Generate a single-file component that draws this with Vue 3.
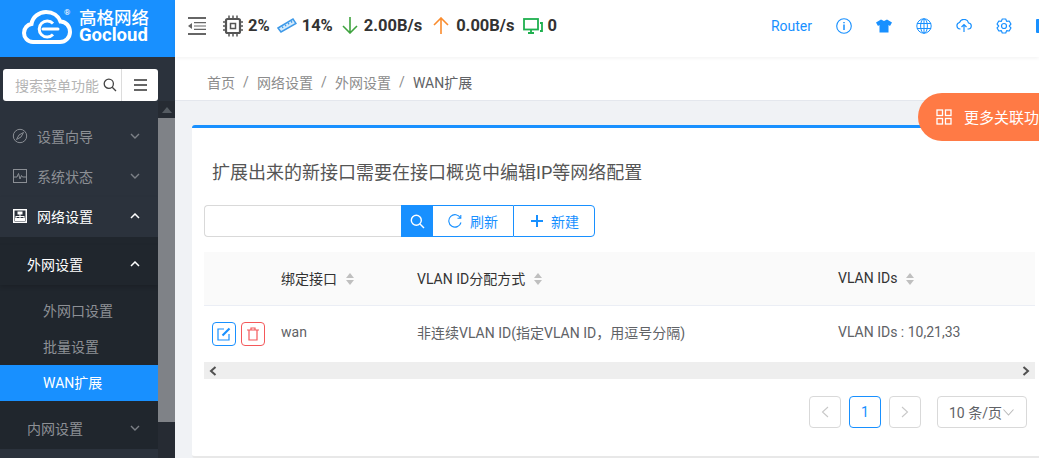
<script setup>
const subs = [
  { t: '外网口设置' },
  { t: '批量设置' },
  { t: 'WAN扩展', active: true }
]
const gear = (() => {
  const pts = []
  for (let i = 0; i < 6; i++) {
    const a = (i * 60 - 90) * Math.PI / 180
    const at = (r, d) => {
      const t = a + d * Math.PI / 180
      return (8 + r * Math.cos(t)).toFixed(2) + ' ' + (8 + r * Math.sin(t)).toFixed(2)
    }
    pts.push(at(5.300, -30), at(7.200, -14), at(7.200, 14))
  }
  return 'M' + pts.join('L') + 'Z'
})()
</script>

<template>
  <div class="page">
    <aside class="side">
      <div class="logo">
        <svg class="cloud" width="50" height="36" viewBox="0 0 50 36" fill="none" stroke="#fff">
          <path stroke-width="4" d="M11 33C5.500 33 2 28.500 2 24C2 19 5.500 15.500 9.500 15C10.500 8 17 3 24 3C31 3 36.500 7 38.500 12.500C44 12.500 48 17.500 48 23C48 28.500 43.500 33 38 33Z"/>
          <path stroke-width="3" d="M31 14.500A8 8 0 1 0 31 25.500"/>
          <path stroke-width="3" stroke-linecap="round" d="M21 20H36"/>
        </svg>
        <span class="reg">®</span>
        <div class="brand"><span class="cn">高格网络</span><span class="en">Gocloud</span></div>
      </div>
      <div class="side-body">
        <div class="search-wrap">
          <div class="side-search">
            <span class="ph">搜索菜单功能</span>
            <svg class="mag" width="14" height="14" viewBox="0 0 14 14" fill="none" stroke="#444" stroke-width="1.300"><circle cx="5.800" cy="5.800" r="4.600"/><path d="M9.200 9.200L13 13"/></svg>
            <span class="burger"><i></i><i></i><i></i></span>
          </div>
        </div>
        <div class="menu-scroll">
          <nav class="menu">
            <div class="m1">
              <svg width="16" height="16" viewBox="0 0 16 16" fill="none" stroke="#8b8f95"><circle cx="8" cy="8" r="6.700"/><path d="M11.500 4.500L9 9L4.500 11.500L7 7Z"/></svg>
              <span>设置向导</span>
              <svg class="chev" width="10" height="6" viewBox="0 0 10 6" fill="none" stroke="#7c8087" stroke-width="1.400"><path d="M1 1L5 5L9 1"/></svg>
            </div>
            <div class="m1">
              <svg width="16" height="16" viewBox="0 0 16 16" fill="none" stroke="#8b8f95"><rect x="1.500" y="1.500" width="13" height="13"/><path d="M2 9H5L6.500 5.500L8 11L9.500 7.500L10.500 9H14"/></svg>
              <span>系统状态</span>
              <svg class="chev" width="10" height="6" viewBox="0 0 10 6" fill="none" stroke="#7c8087" stroke-width="1.400"><path d="M1 1L5 5L9 1"/></svg>
            </div>
            <div class="m1 open">
              <svg width="16" height="16" viewBox="0 0 16 16"><path fill="#fff" fill-rule="evenodd" d="M1 1H15V15H1ZM2.500 2.500V13.500H13.500V2.500ZM5.500 3.500H10.500V6.500H8.500V8H12.500V10H13V13H10V10H11.500V9H8.500V10H10V13H6V10H7.500V9H4.500V10H6V13H3V10H3.500V8H7.500V6.500H5.500Z"/></svg>
              <span>网络设置</span>
              <svg class="chev" width="10" height="6" viewBox="0 0 10 6" fill="none" stroke="#fff" stroke-width="1.500"><path d="M1 5L5 1L9 5"/></svg>
            </div>
            <div class="sub">
              <div class="m2 open">
                <span>外网设置</span>
                <svg class="chev" width="10" height="6" viewBox="0 0 10 6" fill="none" stroke="#fff" stroke-width="1.500"><path d="M1 5L5 1L9 5"/></svg>
              </div>
              <div class="m3-list">
                <div v-for="s in subs" :key="s.t" class="m3" :class="{ active: s.active }">{{ s.t }}</div>
              </div>
              <div class="m2 last">
                <span>内网设置</span>
                <svg class="chev" width="10" height="6" viewBox="0 0 10 6" fill="none" stroke="#7c8087" stroke-width="1.400"><path d="M1 1L5 5L9 1"/></svg>
              </div>
            </div>
          </nav>
          <div class="sbar">
            <div class="sbtn"><svg width="10" height="6" viewBox="0 0 10 6"><path fill="#555b62" d="M5 0L10 6H0Z"/></svg></div>
            <div class="sthumb"></div>
          </div>
        </div>
      </div>
    </aside>

    <div class="main">
      <header class="top">
        <svg class="outdent" width="18" height="18" viewBox="0 0 18 18" fill="#666"><path d="M0 0H18V2H0ZM6 5H18V6.200H6ZM6 8.400H18V9.600H6ZM6 11.800H18V13H6ZM0 16H18V18H0ZM0 9L4 6V12Z"/></svg>
        <svg class="i-cpu" width="20" height="22" viewBox="0 0 20 22" fill="none" stroke="#555"><rect x="3" y="4" width="14" height="14" rx="1.500" stroke-width="2.200"/><rect x="7.500" y="8.500" width="5" height="5" stroke-width="1.500"/><path stroke-width="1.500" d="M6 0.500V3M10 0.500V3M14 0.500V3M6 19V21.500M10 19V21.500M14 19V21.500M0 7H2.500M0 11H2.500M0 15H2.500M17.500 7H20M17.500 11H20M17.500 15H20"/></svg>
        <b class="v v-cpu">2%</b>
        <svg class="i-mem" width="20" height="15" viewBox="0 0 20 15" fill="none" stroke="#3f9ae8"><path stroke-width="1.500" fill="#d6ebfb" d="M1 10L16 1L19 5.500L4 14Z"/><path stroke-width="1.300" stroke="#3f9ae8" d="M6 10L5.200 8.500M9 8.200L8.200 6.700M12 6.400L11.200 4.900M15 4.600L14.200 3.100"/></svg>
        <b class="v v-mem">14%</b>
        <svg class="i-down" width="16" height="17" viewBox="0 0 16 17" fill="none" stroke="#3fa33f" stroke-width="1.600"><path d="M8 0V16M1 9L8 16L15 9"/></svg>
        <b class="v v-down">2.00B/s</b>
        <svg class="i-up" width="16" height="17" viewBox="0 0 16 17" fill="none" stroke="#fa8c2e" stroke-width="1.600"><path d="M8 17V1M1 8L8 1L15 8"/></svg>
        <b class="v v-up">0.00B/s</b>
        <svg class="i-mon" width="20" height="16" viewBox="0 0 20 16" fill="none" stroke="#1fb04f" stroke-width="1.800"><rect x="1" y="1" width="14" height="10.500"/><path d="M5 15H11M8 12V15M17 5H19V13H17"/></svg>
        <b class="v">0</b>
        <span class="router">Router</span>
        <div class="tools">
          <svg width="16" height="16" viewBox="0 0 16 16" fill="none" stroke="#1890ff" stroke-width="1.100"><circle cx="8" cy="8" r="7.300"/><path stroke-width="1.500" d="M8 6.500V12M8 4V5.300"/></svg>
          <svg width="16" height="14" viewBox="0 0 16 14" fill="#1890ff"><path d="M5 0.500L8 2L11 0.500L16 3.500L14 7L12.500 6V13.500H3.500V6L2 7L0 3.500Z"/></svg>
          <svg width="16" height="16" viewBox="0 0 16 16" fill="none" stroke="#1890ff"><circle cx="8" cy="8" r="7.200"/><ellipse cx="8" cy="8" rx="3.400" ry="7.200"/><path d="M8 1V15M1 5.500H15M1 10.500H15"/></svg>
          <svg width="16" height="13" viewBox="0 0 16 13" fill="none" stroke="#1890ff" stroke-width="1.200"><path d="M4.500 10H4A3.300 3.300 0 0 1 3.500 3.500A4.700 4.700 0 0 1 12.500 4A3 3 0 0 1 12 10H11.500"/><path d="M8 13V6M5.500 8L8 5.500L10.500 8"/></svg>
          <svg width="16" height="16" viewBox="0 0 16 16" fill="none" stroke="#1890ff" stroke-width="1.200" stroke-linejoin="round"><path :d="gear"/><circle cx="8" cy="8" r="2.500"/></svg>
          <span class="blue-edge"></span>
        </div>
      </header>

      <div class="crumbs">
        <span>首页</span><em>/</em><span>网络设置</span><em>/</em><span>外网设置</span><em>/</em><span class="cur">WAN扩展</span>
      </div>

      <div class="content">
        <div class="float">
          <svg width="16" height="16" viewBox="0 0 16 16" fill="none" stroke="#fff" stroke-width="1.300"><rect x="1" y="1" width="5.500" height="5.500"/><rect x="9.500" y="1" width="5.500" height="5.500"/><rect x="1" y="9.500" width="5.500" height="5.500"/><rect x="9.500" y="9.500" width="5.500" height="5.500"/></svg>
          <span>更多关联功</span>
        </div>
        <section class="card">
          <h2>扩展出来的新接口需要在接口概览中编辑IP等网络配置</h2>
          <div class="bar">
            <div class="inp"></div>
            <div class="go"><svg width="15" height="15" viewBox="0 0 15 15" fill="none" stroke="#fff" stroke-width="1.400"><circle cx="6.300" cy="6.300" r="5"/><path d="M10 10L14 14"/></svg></div>
            <div class="btn b1">
              <svg width="14" height="14" viewBox="0 0 14 14" fill="none" stroke="#1890ff" stroke-width="1.100"><path d="M12.500 4A6.200 6.200 0 1 0 13 8.500M12.800 1V4.300H9.500"/></svg>
              <span>刷新</span>
            </div>
            <div class="btn b2">
              <svg width="12" height="12" viewBox="0 0 12 12" fill="#1890ff"><path d="M5 0H7V5H12V7H7V12H5V7H0V5H5Z"/></svg>
              <span>新建</span>
            </div>
          </div>
          <div class="table">
            <div class="tr th">
              <div class="c0"></div>
              <div class="c1">绑定接口<span class="sort"><i class="u"></i><i class="d"></i></span></div>
              <div class="c2">VLAN ID分配方式<span class="sort"><i class="u"></i><i class="d"></i></span></div>
              <div class="c3">VLAN IDs<span class="sort"><i class="u"></i><i class="d"></i></span></div>
            </div>
            <div class="tr td">
              <div class="c0 acts">
                <span class="act edit"><svg width="14" height="14" viewBox="0 0 14 14" fill="none" stroke="#1890ff" stroke-width="1.200"><path d="M12 7V13H1V2H7"/><path stroke-width="2.200" d="M5.500 8.500L12.500 1.500"/></svg></span>
                <span class="act del"><svg width="14" height="14" viewBox="0 0 14 14" fill="none" stroke="#f4585a" stroke-width="1.200"><path d="M1 3H13M5 3V1H9V3M3 3V13H11V3"/></svg></span>
              </div>
              <div class="c1">wan</div>
              <div class="c2">非连续VLAN ID(指定VLAN ID，用逗号分隔)</div>
              <div class="c3">VLAN IDs : 10,21,33</div>
            </div>
            <div class="hbar">
              <svg width="8" height="10" viewBox="0 0 8 10" fill="none" stroke="#505050" stroke-width="2"><path d="M6.500 1L2 5L6.500 9"/></svg>
              <svg width="8" height="10" viewBox="0 0 8 10" fill="none" stroke="#505050" stroke-width="2"><path d="M1.500 1L6 5L1.500 9"/></svg>
            </div>
          </div>
          <div class="pager">
            <span class="pg"><svg width="8" height="12" viewBox="0 0 8 12" fill="none" stroke="#c8c8c8" stroke-width="1.100"><path d="M7 1L1.500 6L7 11"/></svg></span>
            <span class="pg on">1</span>
            <span class="pg"><svg width="8" height="12" viewBox="0 0 8 12" fill="none" stroke="#c8c8c8" stroke-width="1.100"><path d="M1 1L6.500 6L1 11"/></svg></span>
            <span class="size">10 条/页<svg width="11" height="7" viewBox="0 0 11 7" fill="none" stroke="#bbb" stroke-width="1.100"><path d="M0.500 0.500L5.500 6L10.500 0.500"/></svg></span>
          </div>
        </section>
      </div>
    </div>
  </div>
</template>

<style>
html, body { margin: 0; overflow: hidden; }
</style>

<style scoped>
.page {
  width: 1039px; height: 458px; overflow: hidden; display: flex;
  font-family: Roboto, "Noto Sans CJK SC", sans-serif; font-size: 14px; color: #606266;
}
.side { width: 175px; flex: none; display: flex; flex-direction: column; background: #2b323c; }
.logo { height: 57px; background: #1890ff; display: flex; align-items: center; position: relative; padding: 0 0 4px 22px; box-sizing: border-box; flex: none; }
.reg { position: absolute; left: 64px; top: 8px; font-size: 8px; color: #fff; }
.brand { display: flex; flex-direction: column; margin: -2px 0 0 7px; color: #fff; font-weight: 700; }
.cn { font-size: 17.500px; line-height: 18px; font-weight: 500; white-space: nowrap; }
.en { font-size: 18.500px; line-height: 16px; }
.side-body { flex: 1; display: flex; flex-direction: column; min-height: 0; }
.search-wrap { height: 44px; flex: none; padding: 12px 0 0 3px; box-sizing: border-box; }
.side-search { width: 155px; height: 32px; background: #fff; border-radius: 3px; display: flex; align-items: center; box-sizing: border-box; padding-left: 12px; }
.ph { color: #b4b4b4; font-size: 14px; width: 85px; white-space: nowrap; overflow: hidden; flex: none; }
.mag { margin-left: 3px; flex: none; }
.burger { margin-left: 4px; height: 32px; flex: 1; border-left: 1px solid #dcdcdc; display: flex; flex-direction: column; justify-content: center; align-items: center; gap: 3px; }
.burger i { width: 13px; height: 2px; background: #666; }
.menu-scroll { flex: 1; display: flex; min-height: 0; }
.menu { width: 158px; flex: none; padding-top: 16px; }
.m1 { height: 40px; display: flex; align-items: center; padding: 0 0 2px 12px; color: #8d9095; gap: 9px; box-sizing: border-box; }
.m1.open { color: #fff; box-shadow: 0 2px 4px rgba(0,0,0,.12); }
.chev { margin-left: auto; margin-right: 18px; }
.sub { background: #20262d; padding-top: 8px; }
.m2 { height: 40px; display: flex; align-items: center; padding: 0 0 2px 27px; color: #8d9095; box-sizing: border-box; }
.m2.open { color: #fff; background: #20262d; box-shadow: 0 2px 4px rgba(0,0,0,.15); }
.m2.last { margin-top: 8px; }
.m3-list { padding-top: 8px; }
.m3 { height: 36px; line-height: 36px; padding-left: 43px; color: #8d9095; }
.m3.active { background: #1890ff; color: #fff; }
.sbar { flex: 1; background: #262b33; display: flex; flex-direction: column; }
.sbtn { height: 17px; display: flex; align-items: center; justify-content: center; }
.sthumb { height: 304px; background: #7f8287; }

.main { width: 864px; flex: none; display: flex; flex-direction: column; background: #f0f2f5; }
.top { height: 57px; flex: none; box-sizing: border-box; background: #fff; display: flex; align-items: center; box-shadow: 0 1px 4px rgba(0,0,0,.06); position: relative; z-index: 2; padding: 0 0 6px 13px; }
.outdent { margin-right: 17px; }
.v { font-size: 16.500px; font-weight: 700; color: #333; white-space: nowrap; }
.i-cpu { margin-right: 5px; }
.v-cpu { margin-right: 7px; }
.i-mem { margin-right: 5px; }
.v-mem { margin-right: 9px; }
.i-down { margin-right: 6px; }
.v-down { margin-right: 11px; }
.i-up { margin-right: 7px; }
.v-up { margin-right: 9px; }
.i-mon { margin-right: 4px; }
.router { color: #1890ff; font-size: 14px; margin-left: auto; margin-right: 24px; }
.tools { display: flex; align-items: center; gap: 24px; margin-right: -13px; }
.blue-edge { width: 16px; height: 14px; background: #1890ff; flex: none; border-radius: 1px; }

.crumbs { height: 44px; flex: none; box-sizing: border-box; background: #fff; border-bottom: 1px solid #e4e7ed; display: flex; align-items: center; padding: 7px 0 0 32px; color: #8c8c8c; font-size: 14px; }
.crumbs em { font-style: normal; margin: 0 8.100px; color: #8c8c8c; }
.crumbs .cur { color: #606266; }

.content { flex: 1; position: relative; padding: 24px 0 0 17px; min-height: 0; }
.float { position: absolute; left: 743px; top: -8px; width: 180px; height: 48px; border-radius: 24px 0 0 24px; background: #ff7a45; color: #fff; display: flex; align-items: center; padding: 0 0 1px 18px; gap: 12px; box-sizing: border-box; white-space: nowrap; z-index: 3; font-size: 15px; }
.card { width: 860px; height: 333px; background: #fff; border-top: 3px solid #1890ff; border-radius: 3px 0 0 3px; box-sizing: border-box; padding: 0 0 0 12px; border-bottom: 2px solid #e8e8e8; }
h2 { margin: 0 0 19px; font-weight: 400; font-size: 18px; line-height: 27px; height: 27px; color: #555; padding: 31px 0 0 8px; }
.bar { display: flex; height: 32px; }
.inp { width: 197px; box-sizing: border-box; border: 1px solid #d9d9d9; border-right: none; border-radius: 4px 0 0 4px; }
.go { width: 32px; background: #1890ff; display: flex; align-items: center; justify-content: center; }
.btn { box-sizing: border-box; border: 1px solid #1890ff; color: #1890ff; display: flex; align-items: center; justify-content: center; gap: 8px; }
.b1 { width: 80px; border-right: none; border-left: none; }
.b2 { width: 82px; padding-left: 2px; border-radius: 0 4px 4px 0; }
.table { margin-top: 15px; width: 831px; }
.tr { display: flex; align-items: center; border-bottom: 1px solid #ebeef5; }
.th { height: 54px; box-sizing: border-box; background: #fafafa; color: #333; }
.th .c1, .th .c2, .th .c3 { display: flex; align-items: center; padding-bottom: 1px; }
.td { height: 56px; box-sizing: border-box; border-bottom: none; }
.td .c1, .td .c2, .td .c3 { padding-bottom: 4px; }
.c0 { width: 77px; flex: none; }
.c1 { width: 136px; flex: none; }
.c2 { width: 421px; flex: none; white-space: nowrap; }
.c3 { flex: 1; white-space: nowrap; }
.sort { display: inline-flex; flex-direction: column; gap: 2px; margin-left: 9px; margin-top: 2px; }
.sort i { width: 0; height: 0; border-left: 4.500px solid transparent; border-right: 4.500px solid transparent; }
.sort .u { border-bottom: 5px solid #bfbfbf; }
.sort .d { border-top: 5px solid #bfbfbf; }
.acts { display: flex; gap: 5px; padding-left: 8px; box-sizing: border-box; }
.act { width: 24px; height: 24px; box-sizing: border-box; border-radius: 4px; display: flex; align-items: center; justify-content: center; }
.edit { border: 1px solid #1890ff; }
.del { border: 1px solid #f4585a; }
.hbar { height: 17px; background: #eee; display: flex; align-items: center; justify-content: space-between; padding: 0 5px; box-sizing: border-box; }
.pager { display: flex; margin-top: 17px; padding-left: 605px; align-items: center; }
.pg { width: 32px; height: 32px; box-sizing: border-box; border: 1px solid #d9d9d9; border-radius: 4px; display: flex; align-items: center; justify-content: center; margin-right: 8px; }
.pg.on { border-color: #1890ff; color: #1890ff; }
.size { margin-left: 8px; width: 90px; height: 32px; box-sizing: border-box; border: 1px solid #d9d9d9; border-radius: 4px; display: flex; align-items: center; padding-left: 11px; gap: 1px; white-space: nowrap; }
</style>
